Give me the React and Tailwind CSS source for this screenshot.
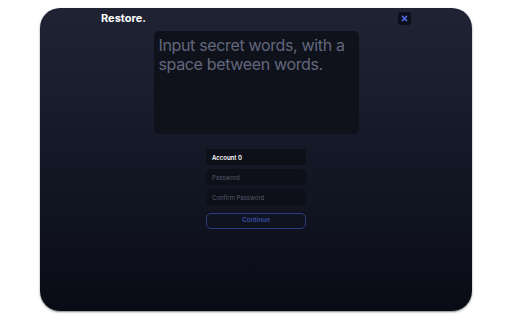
import React from "react";

export default function App() {
  return (
    <div className="w-[512px] h-[320px] bg-white overflow-hidden pt-[8px]" style={{ fontFamily: "Inter, 'Noto Sans', sans-serif" }}>
      <div className="mx-[40px] h-[303px] rounded-[20px] bg-gradient-to-b from-[#1f2333] via-[#141826] to-[#090b16] shadow-[0_1px_2px_rgba(0,0,0,0.5)]">
        <div className="w-[310px] mx-auto flex flex-col">
          <div className="h-[21px] flex items-center justify-between">
            <span className="text-white font-bold text-[11px] leading-none">Restore.</span>
            <div className="w-[13px] h-[13px] rounded-[3px] bg-[#0c0f19] flex items-center justify-center">
              <svg width="7" height="7" viewBox="0 0 10 10">
                <path d="M2 2 L8 8 M8 2 L2 8" stroke="#4f68e0" strokeWidth="2.2" strokeLinecap="round" />
              </svg>
            </div>
          </div>
          <div className="mt-[2px] w-[205px] h-[103px] mx-auto rounded-[5px] bg-[#0f121b] pl-[5px] pr-[2px] pt-[5px]">
            <p className="text-[16px] leading-[19px] tracking-[-0.35px] text-[#62677c]">Input secret words, with a space between words.</p>
          </div>
          <div className="mt-[15px] w-[100px] mx-auto flex flex-col gap-[4px]">
            <div className="h-[16px] rounded-[4px] bg-[#0d1018] flex items-center px-[6px] text-[6px] text-white font-semibold">Account 0</div>
            <div className="h-[16px] rounded-[4px] bg-[#0d1018] flex items-center px-[6px] text-[6px] text-[#565a6c]">Password</div>
            <div className="h-[16px] rounded-[4px] bg-[#0d1018] flex items-center px-[6px] text-[6px] text-[#565a6c]">Confirm Password</div>
            <div className="mt-[4px] h-[16px] rounded-[5px] border border-[#2c3b80] flex items-center justify-center text-[6.5px] font-medium text-[#3f55b5]">Continue</div>
          </div>
        </div>
      </div>
    </div>
  );
}
